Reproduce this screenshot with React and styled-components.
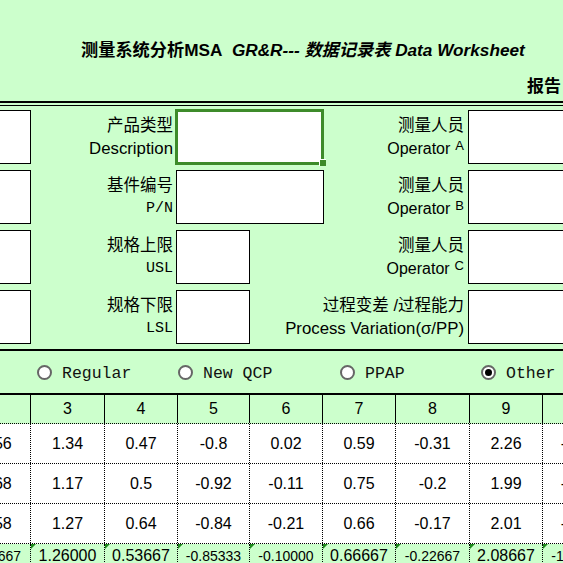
import React from "react";
import styled, { createGlobalStyle } from "styled-components";

const GlobalStyle = createGlobalStyle`
  html, body {
    margin: 0;
    padding: 0;
  }
  body {
    background: #ccffcc;
    font-family: "Liberation Sans", "Noto Sans CJK SC", sans-serif;
  }
`;

const Sheet = styled.div`
  width: 563px;
  height: 563px;
  overflow: hidden;
  background: #ccffcc;
  color: #000;
`;

const Title = styled.h1`
  margin: 0;
  padding: 40px 0 0 81px;
  font-size: 17.2px;
  line-height: 20px;
  font-weight: bold;
  white-space: nowrap;
`;

const Em = styled.span`
  font-style: italic;
`;

const Report = styled.div`
  margin-top: 17px;
  padding-left: 527px;
  font-size: 17px;
  line-height: 20px;
  font-weight: bold;
  white-space: nowrap;
`;

const DoubleRule = styled.div`
  margin-top: 4px;
  height: 2px;
  border-top: 2px solid #000;
  border-bottom: 1px solid #000;
`;

const Form = styled.div`
  display: grid;
  grid-template-columns: 31px 145px 147px 145px 1fr;
  grid-auto-rows: 54px;
  row-gap: 6px;
  padding: 4px 0 5px;
  border-bottom: 2px solid #000;
`;

const Label = styled.div`
  padding: 4px ${(p) => p.$pr}px 0 0;
  font-size: 16.5px;
  line-height: 23px;
  min-width: 0;
`;

const Line = styled.div`
  display: flex;
  justify-content: flex-end;
  align-items: baseline;
  white-space: nowrap;
  font-size: ${(p) => p.$size || "16.5px"};
  font-family: ${(p) =>
    p.$mono
      ? `"Liberation Mono", "Noto Sans CJK SC", monospace`
      : `"Liberation Sans", "Noto Sans CJK SC", sans-serif`};
`;

const Sup = styled.span`
  font-size: 13px;
  margin-left: 5px;
  position: relative;
  top: -4px;
`;

const Box = styled.div`
  box-sizing: border-box;
  width: ${(p) => p.$w || "100%"};
  height: 54px;
  background: #fff;
  border: 1px solid #000;
  ${(p) => p.$cutLeft && "border-left: none;"}
  ${(p) => p.$cutRight && "border-right: none;"}
`;

const ActiveBox = styled(Box)`
  position: relative;
  width: 149px;
  margin: -1px 0 0 -1px;
  height: 56px;
  border: 3px solid #3d8b2a;

  &::after {
    content: "";
    position: absolute;
    right: -5px;
    bottom: -4px;
    width: 6px;
    height: 6px;
    background: #3d8b2a;
    border-left: 1px solid #fff;
    border-top: 1px solid #fff;
  }
`;

const Options = styled.div`
  display: grid;
  grid-template-columns: 141px 162px 141px 1fr;
  padding-left: 37px;
  height: 42px;
  align-items: center;
  border-bottom: 2px solid #000;
`;

const Option = styled.label`
  display: flex;
  align-items: center;
  gap: 10px;
  font-family: "Liberation Mono", monospace;
  font-size: 16.5px;
  color: #111;
  white-space: nowrap;
`;

const OptionText = styled.span`
  padding-top: 3px;
`;

const Radio = styled.span`
  box-sizing: border-box;
  width: 15px;
  height: 15px;
  border-radius: 50%;
  border: 2px solid #666;
  background: #fff;
  display: flex;
  align-items: center;
  justify-content: center;

  &::after {
    content: "";
    width: 7px;
    height: 7px;
    border-radius: 50%;
    background: ${(p) => (p.$checked ? "#000" : "transparent")};
  }
`;

const Table = styled.div`
  margin-left: -43px;
`;

const Row = styled.div`
  display: grid;
  grid-template-columns: 74px 74px 73px 72px 73px 73px 74px 73px 73px;
  height: ${(p) => p.$h}px;
  background: ${(p) => p.$bg};
  border-bottom: ${(p) => (p.$last ? "none" : "1px dotted #000")};
`;

const Cell = styled.div`
  position: relative;
  display: flex;
  align-items: ${(p) => (p.$low ? "flex-start" : "center")};
  padding-top: ${(p) => (p.$low ? "3px" : "0")};
  justify-content: center;
  border-right: 1px ${(p) => (p.$solid ? "solid" : "dotted")} #000;
  font-size: ${(p) => (p.$small ? "14px" : "16px")};
  line-height: 18px;
  white-space: nowrap;

  ${(p) =>
    p.$flag &&
    `&::before {
      content: "";
      position: absolute;
      top: 0;
      left: 0;
      border-top: 5px solid #1f8a1f;
      border-right: 5px solid transparent;
    }`}
`;

const parts = [2, 3, 4, 5, 6, 7, 8, 9, 10];

const trials = [
  ["-0.56", "1.34", "0.47", "-0.8", "0.02", "0.59", "-0.31", "2.26", "-1.36"],
  ["-0.68", "1.17", "0.5", "-0.92", "-0.11", "0.75", "-0.2", "1.99", "-1.29"],
  ["-0.58", "1.27", "0.64", "-0.84", "-0.21", "0.66", "-0.17", "2.01", "-1.31"],
];

const means = [
  "-0.60667",
  "1.26000",
  "0.53667",
  "-0.85333",
  "-0.10000",
  "0.66667",
  "-0.22667",
  "2.08667",
  "-1.32000",
];

const options = [
  { name: "Regular" },
  { name: "New QCP" },
  { name: "PPAP" },
  { name: "Other", checked: true },
];

const Field = ({ zh, en, mono, pr, size }) => (
  <Label $pr={pr}>
    <Line>{zh}</Line>
    <Line $mono={mono} $size={size}>
      {en}
    </Line>
  </Label>
);

const operator = (letter) => (
  <>
    Operator<Sup>{letter}</Sup>
  </>
);

const App = () => (
  <>
    <GlobalStyle />
    <Sheet>
      <Title>
        测量系统分析MSA&nbsp;&nbsp;<Em>GR&amp;R--- 数据记录表 Data Worksheet</Em>
      </Title>
      <Report>报告</Report>
      <DoubleRule />

      <Form>
        <Box $cutLeft />
        <Field zh="产品类型" en="Description" pr={3} size="16.8px" />
        <ActiveBox />
        <Field zh="测量人员" en={operator("A")} pr={4} size="16px" />
        <Box $w="120px" $cutRight />

        <Box $cutLeft />
        <Field zh="基件编号" en="P/N" mono pr={3} size="15px" />
        <Box $w="148px" />
        <Field zh="测量人员" en={operator("B")} pr={4} size="16px" />
        <Box $w="120px" $cutRight />

        <Box $cutLeft />
        <Field zh="规格上限" en="USL" mono pr={3} size="15px" />
        <Box $w="74px" />
        <Field zh="测量人员" en={operator("C")} pr={4} size="16px" />
        <Box $w="120px" $cutRight />

        <Box $cutLeft />
        <Field zh="规格下限" en="LSL" mono pr={3} size="15px" />
        <Box $w="74px" />
        <Field
          zh="过程变差 /过程能力"
          en="Process Variation(σ/PP)"
          pr={4}
          size="16.8px"
        />
        <Box $w="120px" $cutRight />
      </Form>

      <Options>
        {options.map((o) => (
          <Option key={o.name}>
            <Radio $checked={o.checked} />
            <OptionText>{o.name}</OptionText>
          </Option>
        ))}
      </Options>

      <Table>
        <Row $h={28} $bg="#ccffcc">
          {parts.map((n) => (
            <Cell key={n} $solid>
              {n}
            </Cell>
          ))}
        </Row>
        {trials.map((row, i) => (
          <Row key={i} $h={39} $bg="#fff">
            {row.map((v, j) => (
              <Cell key={j}>{v}</Cell>
            ))}
          </Row>
        ))}
        <Row $h={30} $bg="#ccffcc" $last>
          {means.map((v, j) => (
            <Cell key={j} $flag $low $small={v.length > 7}>
              {v}
            </Cell>
          ))}
        </Row>
      </Table>
    </Sheet>
  </>
);

export default App;
